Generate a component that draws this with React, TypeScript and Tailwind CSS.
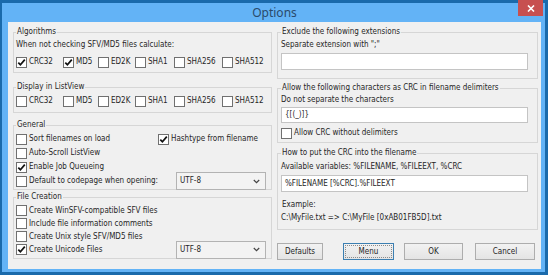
import React from 'react';

const font = {fontFamily: '"DejaVu Sans Condensed", "DejaVu Sans", "Liberation Sans", sans-serif'};

const Check = ({checked = false}: {checked?: boolean}) => (
    <span className="flex h-[11px] w-[11px] shrink-0 items-center justify-center border border-[#707070] bg-white">
        {checked ? (
            <svg width="9" height="9" viewBox="0 0 9 9">
                <path d="M1.3 4.6 L3.4 6.8 L7.8 1.6" fill="none" stroke="#111" strokeWidth="1.7"/>
            </svg>
        ) : null}
    </span>
);

const Box = ({label, checked, className = ''}: {label: string; checked?: boolean; className?: string}) => (
    <div className={`flex items-center gap-[2px] ${className}`}>
        <Check checked={checked}/>
        <span className="whitespace-nowrap">{label}</span>
    </div>
);

const Select = () => (
    <div className="flex h-[18px] w-[90px] items-center justify-between border border-[#b3b3b3] bg-[#f3f3f3] pl-[3px] pr-[5px]">
        <span>UTF-8</span>
        <svg width="7" height="5" viewBox="0 0 7 5">
            <path d="M0.8 1 L3.5 3.7 L6.2 1" fill="none" stroke="#444" strokeWidth="1.2"/>
        </svg>
    </div>
);

const Group = ({title, className = '', children}: {title: string; className?: string; children: React.ReactNode}) => (
    <fieldset className={`border border-[#d6d6d6] pl-[2px] ${className}`}>
        <legend className="h-[12px] px-[1px] leading-[12px]">{title}</legend>
        {children}
    </fieldset>
);

const Button = ({label, className = '', focused = false}: {label: string; className?: string; focused?: boolean}) => (
    <div className={`flex h-[17px] items-center justify-center border bg-gradient-to-b from-[#f2f2f2] to-[#e4e4e4] ${focused ? 'border-[#3c7fb1]' : 'border-[#adadad]'} ${className}`}>
        <div className={`flex h-full w-full items-center justify-center ${focused ? 'outline outline-1 -outline-offset-2 outline-dotted outline-[#8a8a8a]' : ''}`}>
            {label}
        </div>
    </div>
);

const algos = [
    {name: 'CRC32', w: 'w-[47px]'},
    {name: 'MD5', w: 'w-[35px]'},
    {name: 'ED2K', w: 'w-[37px]'},
    {name: 'SHA1', w: 'w-[39px]'},
    {name: 'SHA256', w: 'w-[48px]'},
    {name: 'SHA512', w: 'w-[44px]'},
];

export default function App() {
    return (
        <div className="relative h-[275px] w-[548px] bg-[#1a6aab] pb-[3px] pl-[2px] pr-[3px] pt-[3px] text-[8px] text-[#262626]" style={font}>
            <div className="flex h-full flex-col bg-[#63b3f6] pb-[3px] pl-[6px] pr-[4px]">
                <div className="flex h-[19px] items-center justify-center text-[12px] text-[#2a4a6b]"
                     style={{fontFamily: '"Noto Sans", "Liberation Sans", sans-serif'}}>
                    Options
                </div>
                <div className="flex flex-1 bg-[#f0f0f0] pl-[5px]">
                    {/* left column */}
                    <div className="flex w-[259px] flex-col pt-[4px]">
                        <Group title="Algorithms" className="h-[47px]">
                            <div className="mt-[1px] h-[12px] leading-[12px]">When not checking SFV/MD5 files calculate:</div>
                            <div className="mt-[5px] flex h-[12px]">
                                {algos.map((a, i) => (
                                    <Box key={a.name} label={a.name} checked={i < 2} className={a.w}/>
                                ))}
                            </div>
                        </Group>
                        <Group title="Display in ListView" className="mt-[8px] h-[32px]">
                            <div className="mt-[2px] flex h-[12px]">
                                {algos.map((a) => (
                                    <Box key={a.name} label={a.name} className={a.w}/>
                                ))}
                            </div>
                        </Group>
                        <Group title="General" className="mt-[6px] h-[71px]">
                            <div className="mt-[1px] flex h-[14px] items-center">
                                <Box label="Sort filenames on load" className="w-[142px]"/>
                                <Box label="Hashtype from filename" checked/>
                            </div>
                            <div className="flex h-[14px] items-center">
                                <Box label="Auto-Scroll ListView"/>
                            </div>
                            <div className="flex h-[14px] items-center">
                                <Box label="Enable Job Queueing" checked/>
                            </div>
                            <div className="flex h-[14px] items-center justify-between pr-[5px]">
                                <Box label="Default to codepage when opening:"/>
                                <Select/>
                            </div>
                        </Group>
                        <Group title="File Creation" className="mt-[1px] h-[68px]">
                            <div className="mt-[1px] flex h-[13px] items-center">
                                <Box label="Create WinSFV-compatible SFV files"/>
                            </div>
                            <div className="flex h-[13px] items-center">
                                <Box label="Include file information comments"/>
                            </div>
                            <div className="flex h-[13px] items-center">
                                <Box label="Create Unix style SFV/MD5 files"/>
                            </div>
                            <div className="flex h-[13px] items-center justify-between pr-[5px]">
                                <Box label="Create Unicode Files" checked/>
                                <Select/>
                            </div>
                        </Group>
                    </div>

                    {/* right column */}
                    <div className="ml-[5px] flex w-[261px] flex-col pt-[4px]">
                        <Group title="Exclude the following extensions" className="h-[53px] pl-[3px]">
                            <div className="mt-[1px] h-[12px] leading-[12px]">Separate extension with ";"</div>
                            <div className="mt-[2px] h-[17px] w-[247px] border border-[#c4c4c4] bg-white"/>
                        </Group>
                        <Group title="Allow the following characters as CRC in filename delimiters" className="mt-[3px] h-[61px] pl-[3px]">
                            <div className="h-[12px] leading-[12px]">Do not separate the characters</div>
                            <div className="mt-[1px] flex h-[16px] w-[247px] items-center border border-[#c4c4c4] bg-white pl-[3px]">{'{[(_)]}'}</div>
                            <div className="mt-[4px] flex h-[12px] items-center">
                                <Box label="Allow CRC without delimiters"/>
                            </div>
                        </Group>
                        <Group title="How to put the CRC into the filename" className="mt-[4px] h-[83px] pl-[3px]">
                            <div className="mt-[2px] h-[12px] leading-[12px]">Available variables: %FILENAME, %FILEEXT, %CRC</div>
                            <div className="mt-[2px] flex h-[17px] w-[247px] items-center border border-[#c4c4c4] bg-white pl-[3px]">%FILENAME [%CRC].%FILEEXT</div>
                            <div className="mt-[7px] h-[12px] pl-[1px] leading-[12px]">Example:</div>
                            <div className="mt-[1px] h-[12px] leading-[12px]">C:\MyFile.txt =&gt; C:\MyFile [0xAB01FB5D].txt</div>
                        </Group>
                        <div className="mt-[13px] flex">
                            <Button label="Defaults" className="w-[46px]"/>
                            <Button label="Menu" focused className="ml-[20px] w-[51px]"/>
                            <Button label="OK" className="ml-[10px] w-[59px]"/>
                            <Button label="Cancel" className="ml-[12px] w-[60px]"/>
                        </div>
                    </div>
                </div>
            </div>
            <div className="absolute right-[5px] top-0 flex h-[16px] w-[25px] items-center justify-center bg-[#c75050]">
                <svg width="8" height="7" viewBox="0 0 8 7">
                    <path d="M1 0.5 L7 6.5 M7 0.5 L1 6.5" stroke="#fff" strokeWidth="1.6"/>
                </svg>
            </div>
        </div>
    );
}
